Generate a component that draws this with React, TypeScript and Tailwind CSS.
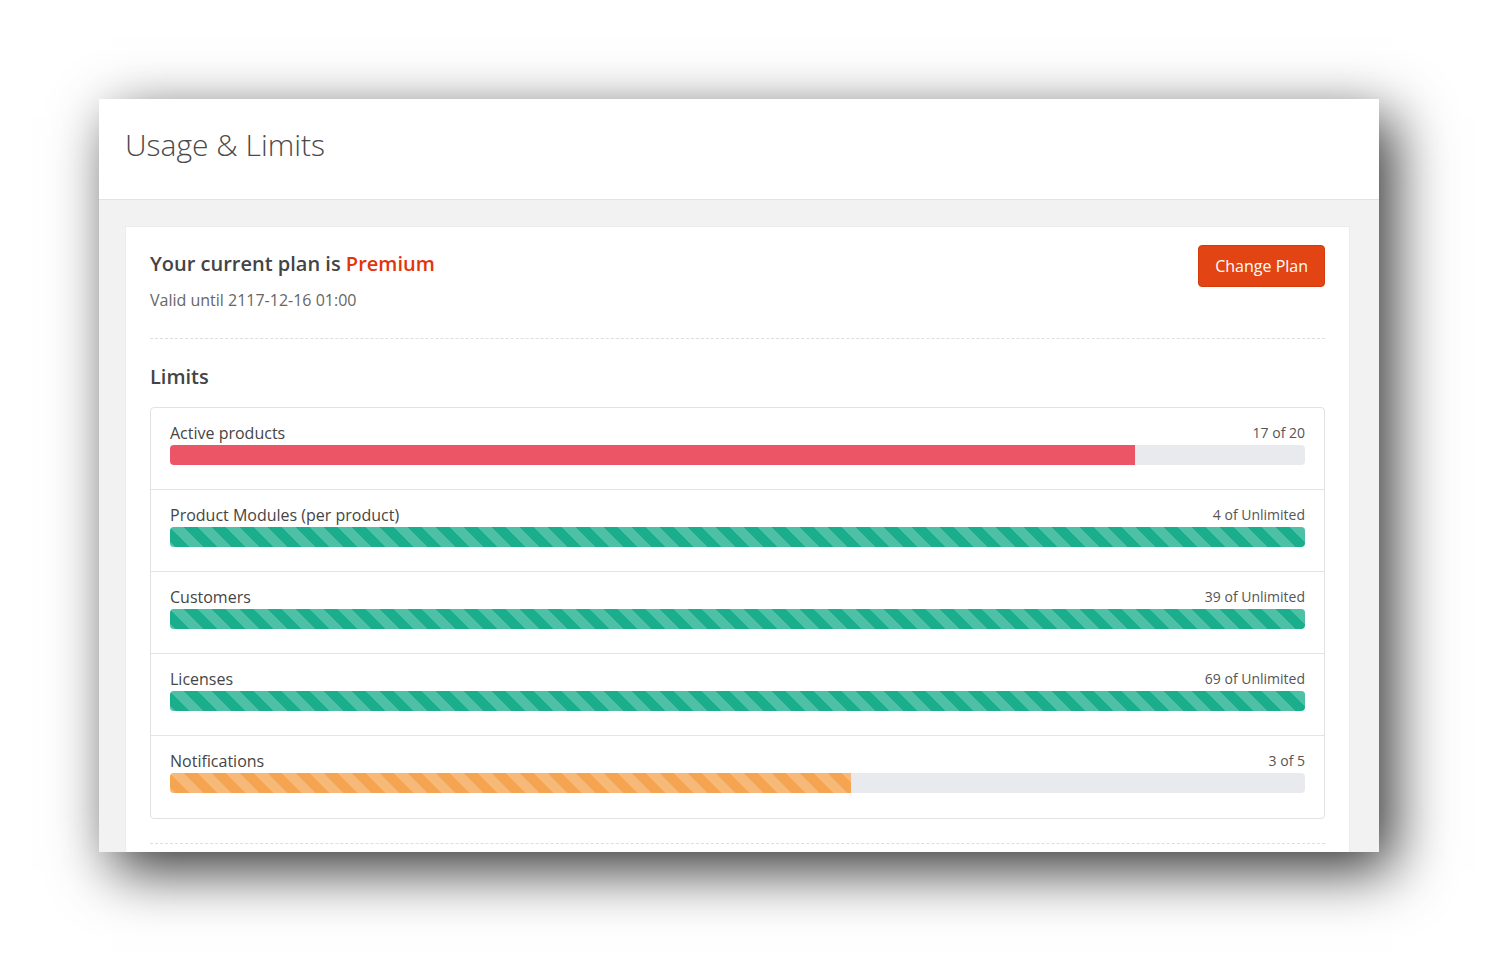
import React from "react";

interface Limit {
  label: string;
  value: string;
  pct: number;
  color: string;
  striped: boolean;
}

const limits: Limit[] = [
  { label: "Active products", value: "17 of 20", pct: 85, color: "bg-[#ec5566]", striped: false },
  { label: "Product Modules (per product)", value: "4 of Unlimited", pct: 100, color: "bg-[#1bae8c]", striped: true },
  { label: "Customers", value: "39 of Unlimited", pct: 100, color: "bg-[#1bae8c]", striped: true },
  { label: "Licenses", value: "69 of Unlimited", pct: 100, color: "bg-[#1bae8c]", striped: true },
  { label: "Notifications", value: "3 of 5", pct: 60, color: "bg-[#f5a552]", striped: true },
];

const stripes =
  "bg-[linear-gradient(45deg,rgba(255,255,255,0.22)_25%,transparent_25%,transparent_50%,rgba(255,255,255,0.22)_50%,rgba(255,255,255,0.22)_75%,transparent_75%,transparent)] bg-[length:28px_28px]";

function LimitRow({ limit, last }: { limit: Limit; last: boolean }) {
  return (
    <div className={`h-[82px] px-[19px] pt-[12px] ${last ? "" : "border-b border-[#e4e4e4]"}`}>
      <div className="flex items-end justify-between h-[25px]">
        <span className="text-[16px] text-[#454545]">{limit.label}</span>
        <span className="text-[14px] text-[#555] mb-[2px]">{limit.value}</span>
      </div>
      <div className="h-[20px] rounded-[4px] bg-[#e9eaee] overflow-hidden flex">
        <div
          className={`h-full ${limit.color} ${limit.striped ? stripes : ""}`}
          style={{ width: `${limit.pct}%` }}
        />
      </div>
    </div>
  );
}

export default function App() {
  return (
    <div className="w-[1504px] h-[977px] bg-white pt-[99px] pl-[99px] font-['Open_Sans',sans-serif]">
      <div className="w-[1280px] h-[753px] overflow-hidden bg-[#f2f2f2] shadow-[14px_18px_55px_rgba(0,0,0,0.8)]">
        <header className="h-[101px] bg-white border-b border-[#e3e3e3] pl-[26px] pt-[23px]">
          <h1 className="text-[30px] font-light text-[#4a4a4a]">Usage &amp; Limits</h1>
        </header>
        <section className="pl-[26px] pt-[26px]">
          <article className="w-[1225px] bg-white px-[24px] pt-[19px] pb-[40px] border border-[#ececec]">
            <div className="flex justify-between">
              <div>
                <h2 className="text-[20px] font-semibold text-[#444] leading-[36px]">
                  Your current plan is <span className="text-[#e2340c]">Premium</span>
                </h2>
                <p className="text-[16px] text-[#666] mt-[6px]">Valid until 2117-12-16 01:00</p>
              </div>
              <button className="mt-[-1px] h-[42px] px-[16px] rounded-[4px] bg-[#e24513] border border-[#d43b0b] text-white text-[16px]">
                Change Plan
              </button>
            </div>
            <div className="border-t border-dashed border-[#dedede] mt-[26px]" />
            <h3 className="text-[20px] font-semibold text-[#444] mt-[23px] mb-[15px]">Limits</h3>
            <div className="border border-[#e2e2e2] rounded-[4px]">
              {limits.map((l, i) => (
                <LimitRow key={l.label} limit={l} last={i === limits.length - 1} />
              ))}
            </div>
            <div className="border-t border-dashed border-[#dedede] mt-[24px]" />
          </article>
        </section>
      </div>
    </div>
  );
}
